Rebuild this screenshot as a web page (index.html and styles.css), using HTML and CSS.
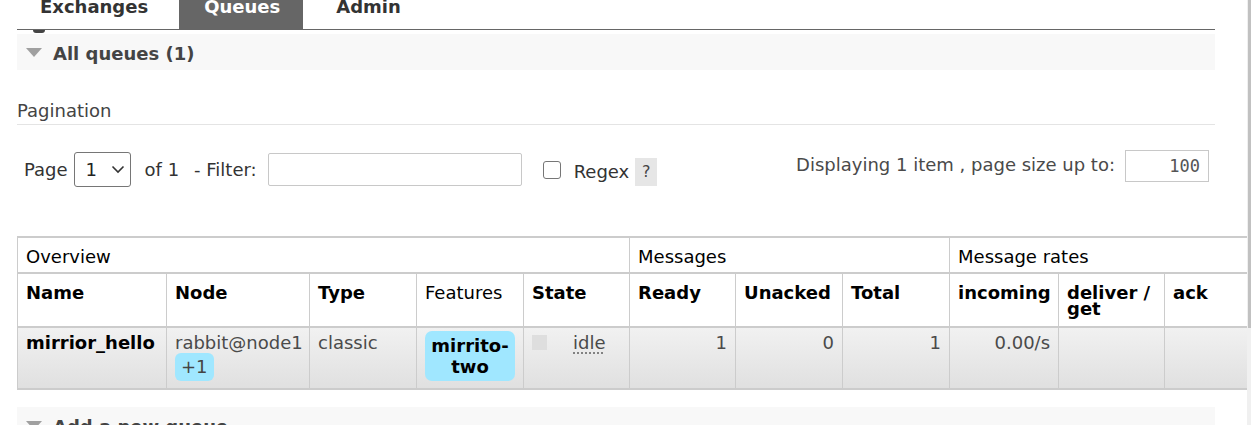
FILE: index.html
```html
<!DOCTYPE html>
<html lang="en">
<head>
<meta charset="utf-8">
<title>Queues</title>
<link rel="stylesheet" href="styles.css">
</head>
<body>
<div class="scrollbar"><div class="thumb"></div></div>
<div class="page">
  <nav class="tabs">
    <a class="tab" href="#">Exchanges</a>
    <a class="tab active" href="#">Queues</a>
    <a class="tab" href="#">Admin</a>
  </nav>
  <div class="peek"><span></span></div>

  <div class="section-head"><span class="tri"></span><h2>All queues (1)</h2></div>

  <div class="pag-title">Pagination</div>
  <div class="pager">
    <div class="pager-left">
      <span class="lbl">Page</span>
      <div class="select"><span>1</span><svg width="14" height="9" viewBox="0 0 14 9"><path d="M1.5 1.5 L7 7 L12.5 1.5" fill="none" stroke="#333" stroke-width="1.6"/></svg></div>
      <span class="lbl of">of 1</span>
      <span class="lbl filter">- Filter:</span>
      <div class="text-input"></div>
      <div class="checkbox"></div>
      <span class="lbl regex">Regex</span>
      <span class="help">?</span>
    </div>
    <div class="pager-right">
      <span class="disp">Displaying 1 item , page size up to:</span>
      <div class="size-input">100</div>
    </div>
  </div>

  <table class="list">
    <colgroup>
      <col class="c-name"><col class="c-node"><col class="c-107"><col class="c-107"><col class="c-106">
      <col class="c-106"><col class="c-107"><col class="c-107"><col class="c-109"><col class="c-106"><col class="c-106">
    </colgroup>
    <thead>
      <tr class="group">
        <th colspan="5">Overview</th>
        <th colspan="3">Messages</th>
        <th colspan="3">Message rates</th>
      </tr>
      <tr class="heads">
        <th>Name</th>
        <th>Node</th>
        <th>Type</th>
        <th class="plain">Features</th>
        <th>State</th>
        <th>Ready</th>
        <th>Unacked</th>
        <th>Total</th>
        <th>incoming</th>
        <th>deliver / get</th>
        <th>ack</th>
      </tr>
    </thead>
    <tbody>
      <tr>
        <td class="name">mirrior_hello</td>
        <td><div>rabbit@node1</div><span class="mirror">+1</span></td>
        <td>classic</td>
        <td><span class="policy">mirrito-two</span></td>
        <td><span class="status"></span><abbr class="state">idle</abbr></td>
        <td class="num">1</td>
        <td class="num">0</td>
        <td class="num">1</td>
        <td class="num">0.00/s</td>
        <td></td>
        <td></td>
      </tr>
    </tbody>
  </table>

  <div class="section-head add"><span class="tri"></span><h2>Add a new queue</h2></div>
</div>
</body>
</html>
```

FILE: styles.css
```css
html, body {
  margin: 0;
  padding: 0;
  overflow: hidden;
  background: #fff;
}

body {
  font-family: "DejaVu Sans", Verdana, sans-serif;
  font-size: 18px;
  line-height: 21px;
  color: #444;
}

.scrollbar {
  position: fixed;
  top: 0;
  right: 0;
  bottom: 0;
  width: 4px;
  background: #f0f0f0;
}

.scrollbar .thumb {
  position: absolute;
  left: 1px;
  top: 0;
  width: 3px;
  height: 328px;
  background: #c1c1c1;
}

.page {
  display: flow-root;
  width: 1198px;
  margin-left: 17px;
}

/* tabs */
.tabs {
  display: flex;
  margin-top: -12px;
  padding-left: 0;
  border-bottom: 1px solid #666;
}

.tab {
  display: block;
  font-weight: bold;
  color: #333;
  text-decoration: none;
  padding: 8px 23px 12px 25px;
  margin-right: 8px;
}

.tab:first-child {
  margin-left: -2px;
}

.tab.active {
  background: #666;
  color: #fff;
}

.peek {
  height: 4px;
}

.peek span {
  display: block;
  margin-left: 16px;
  width: 12px;
  height: 3px;
  background: #444;
  border-radius: 0 0 6px 6px;
}

/* section headers */
.section-head {
  display: flex;
  align-items: center;
  background: #f8f8f8;
  padding: 9px 0 6px 9px;
}

.section-head h2 {
  margin: 0;
  font-size: 18px;
  line-height: 21px;
  font-weight: bold;
  color: #444;
}

.tri {
  width: 0;
  height: 0;
  border-left: 8.5px solid transparent;
  border-right: 8.5px solid transparent;
  border-top: 9px solid #a0a0a0;
  margin-right: 11px;
  margin-top: -2px;
}

.section-head.add {
  margin-top: 17px;
}

/* pagination */
.pag-title {
  margin-top: 30px;
  padding-bottom: 3px;
  border-bottom: 1px solid #e4e4e4;
  color: #444;
}

.pager {
  display: flex;
  align-items: flex-start;
  padding-top: 25px;
}

.pager-left {
  display: flex;
  align-items: center;
  margin-top: 2px;
  padding-left: 7px;
  height: 35px;
  color: #333;
}

.select {
  display: flex;
  align-items: center;
  box-sizing: border-box;
  width: 57px;
  height: 35px;
  margin-left: 6px;
  padding-left: 11px;
  border: 1px solid #767676;
  border-radius: 3px;
  color: #222;
}

.select svg {
  margin-left: 14px;
}

.lbl.of {
  margin-left: 14px;
}

.lbl.filter {
  margin-left: 15px;
}

.text-input {
  box-sizing: border-box;
  width: 254px;
  height: 33px;
  margin-left: 11px;
  border: 1px solid #c8c8c8;
  border-radius: 2px;
}

.checkbox {
  box-sizing: border-box;
  width: 18px;
  height: 18px;
  margin-left: 21px;
  border: 1.5px solid #767676;
  border-radius: 3px;
}

.lbl.regex {
  margin-left: 13px;
  margin-top: 4px;
}

.help {
  display: block;
  width: 22px;
  height: 28px;
  margin-left: 6px;
  margin-top: 5px;
  background: #e6e6e6;
  font-size: 16px;
  line-height: 28px;
  text-align: center;
  color: #444;
}

.pager-right {
  display: flex;
  align-items: center;
  margin-left: auto;
  margin-right: 6px;
  height: 32px;
  color: #4a4a4a;
}

.disp {
  margin-top: -3px;
}

.size-input {
  box-sizing: border-box;
  width: 84px;
  height: 32px;
  margin-left: 10px;
  padding-right: 8px;
  border: 1px solid #c8c8c8;
  font-family: "DejaVu Sans Mono", monospace;
  font-size: 17px;
  line-height: 30px;
  text-align: right;
  color: #555;
}

/* table */
table.list {
  margin-top: 49px;
  border-spacing: 0;
  border-collapse: separate;
  table-layout: fixed;
  width: 1254px;
  border-top: 2px solid #ccc;
  border-left: 1px solid #ccc;
}

.c-name { width: 149px; }
.c-node { width: 143px; }
.c-106 { width: 106px; }
.c-107 { width: 107px; }
.c-109 { width: 109px; }

table.list th,
table.list td {
  border-right: 1px solid #ccc;
  border-bottom: 2px solid #ccc;
  text-align: left;
  vertical-align: top;
}

table.list tr.group th {
  font-weight: normal;
  color: #000;
  padding: 8px 8px 5px 8px;
  line-height: 21px;
}

table.list tr.heads th {
  font-weight: bold;
  color: #000;
  padding: 11px 8px 9px 8px;
  line-height: 16px;
}

table.list tr.heads th.plain {
  font-weight: normal;
}

table.list td {
  padding: 4px 8px 7px 8px;
  background: linear-gradient(#f1f1f1, #e0e0e0);
  color: #4a4a4a;
  white-space: normal;
}

table.list td.name {
  font-weight: bold;
  color: #000;
}

table.list td.num {
  text-align: right;
}

.mirror {
  display: inline-block;
  padding: 3px 6px 4px 6px;
  border-radius: 6px;
  background: #a0e7ff;
  color: #444;
}

.policy {
  display: block;
  margin-top: -1px;
  padding: 4px 2px;
  border-radius: 7px;
  background: #a0e7ff;
  color: #000;
  font-weight: bold;
  text-align: center;
}

.status {
  display: inline-block;
  vertical-align: top;
  width: 15px;
  height: 15px;
  margin-top: 3px;
  background: #dedede;
}

abbr.state {
  margin-left: 26px;
  text-decoration: underline dotted #777;
  text-underline-offset: 4px;
}
```
